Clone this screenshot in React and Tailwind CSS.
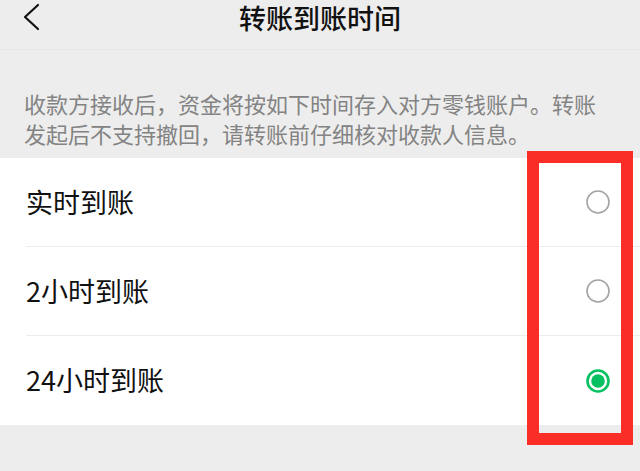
import React, { useState } from "react";

const options = ["实时到账", "2小时到账", "24小时到账"];

const Radio = ({ checked }) =>
  checked ? (
    <svg width="26" height="26" viewBox="0 0 26 26">
      <circle cx="13" cy="13" r="10.5" fill="none" stroke="#07c160" strokeWidth="2.6" />
      <circle cx="13" cy="13" r="6.8" fill="#07c160" />
    </svg>
  ) : (
    <svg width="26" height="26" viewBox="0 0 26 26">
      <circle cx="13" cy="13" r="11" fill="none" stroke="#a3a3a3" strokeWidth="1.6" />
    </svg>
  );

const App = () => {
  const [selected, setSelected] = useState(2);

  return (
    <div
      className="relative w-[640px] h-[471px] overflow-hidden bg-[#ededed]"
      style={{ fontFamily: '"Noto Sans CJK SC", "Noto Sans", sans-serif' }}
    >
      {/* Header */}
      <div className="relative h-[50px] flex items-start justify-center pt-[3px] border-b border-[#e6e6e6]">
        <button className="absolute left-[22px] top-[3px] p-0">
          <svg width="20" height="28" viewBox="0 0 20 28">
            <path d="M16 2 L3 14 L16 26" fill="none" stroke="#111" strokeWidth="2.2" strokeLinecap="round" strokeLinejoin="round" />
          </svg>
        </button>
        <h1 className="text-[27px] leading-[30px] font-medium text-[#111]">
          转账到账时间
        </h1>
      </div>

      {/* Description */}
      <div className="pt-[38px] pb-[10px] pl-[24px] pr-[30px]">
        <p className="text-[22px] leading-[30px] text-[#838383]">
          收款方接收后，资金将按如下时间存入对方零钱账户。转账发起后不支持撤回，请转账前仔细核对收款人信息。
        </p>
      </div>

      {/* Options */}
      <div className="bg-white">
        {options.map((label, i) => (
          <div
            key={label}
            onClick={() => setSelected(i)}
            className="h-[89px] pl-[26px] cursor-pointer"
          >
            <div
              className={`h-full flex items-center justify-between pr-[29px] ${
                i < options.length - 1 ? "border-b border-[#ececec]" : ""
              }`}
            >
              <span className="text-[27px] text-[#111]">{label}</span>
              <Radio checked={selected === i} />
            </div>
          </div>
        ))}
      </div>

      {/* Annotation box */}
      <div className="absolute left-[527px] top-[151px] w-[106px] h-[294px] border-[12px] border-[#fb2d27] pointer-events-none" />
    </div>
  );
};

export default App;
